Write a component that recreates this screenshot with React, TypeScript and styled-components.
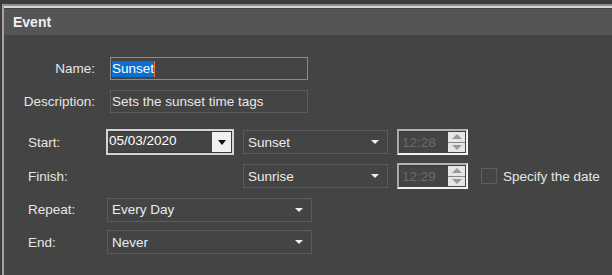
import styled, { createGlobalStyle } from "styled-components";

const GlobalStyle = createGlobalStyle`
    body {
        margin: 0;
        background: #3c3c3c;
        font-family: "Liberation Sans", Arial, sans-serif;
        font-size: 13.5px;
        color: #e6e6e6;
    }
`

export default function App() {
    return (
        <>
            <GlobalStyle />
            <Page>
                <Panel>
                    <Header>Event</Header>
                    <TopForm>
                        <RightLabel>Name:</RightLabel>
                        <TextBox focused>
                            <Selected>Sunset</Selected>
                            <Caret />
                        </TextBox>
                        <RightLabel>Description:</RightLabel>
                        <TextBox>Sets the sunset time tags</TextBox>
                    </TopForm>
                    <Schedule>
                        <Row height={26}>
                            <Label>Start:</Label>
                            <DatePicker>
                                <DateText>05/03/2020</DateText>
                                <DateButton>
                                    <Arrow color="#111" />
                                </DateButton>
                            </DatePicker>
                            <Combo width={145}>
                                Sunset
                                <Arrow color="#eee" small />
                            </Combo>
                            <TimeSpin>
                                <TimeText>12:28</TimeText>
                                <SpinButtons>
                                    <SpinHalf><SpinArrow up /></SpinHalf>
                                    <SpinHalf><SpinArrow /></SpinHalf>
                                </SpinButtons>
                            </TimeSpin>
                        </Row>
                        <Row height={26}>
                            <Label>Finish:</Label>
                            <DateSlot />
                            <Combo width={145}>
                                Sunrise
                                <Arrow color="#eee" small />
                            </Combo>
                            <TimeSpin>
                                <TimeText>12:29</TimeText>
                                <SpinButtons>
                                    <SpinHalf><SpinArrow up /></SpinHalf>
                                    <SpinHalf><SpinArrow /></SpinHalf>
                                </SpinButtons>
                            </TimeSpin>
                            <CheckRow>
                                <CheckBox />
                                <span>Specify the date</span>
                            </CheckRow>
                        </Row>
                        <Row height={25}>
                            <Label>Repeat:</Label>
                            <Combo width={205} shift={1}>
                                Every Day
                                <Arrow color="#eee" small />
                            </Combo>
                        </Row>
                        <Row height={24}>
                            <Label>End:</Label>
                            <Combo width={205} shift={1}>
                                Never
                                <Arrow color="#eee" small />
                            </Combo>
                        </Row>
                    </Schedule>
                </Panel>
            </Page>
        </>
    )
}

const Page = styled.div`
    width: 612px;
    height: 275px;
    padding: 4px 0 0 2px;
    box-sizing: border-box;
    overflow: hidden;
`

const Panel = styled.div`
    height: 100%;
    background: #444444;
    border-top: 2px solid #8e8e8e;
    border-left: 2px solid #a4a4a4;
    box-shadow: inset 0 2px 0 #d6d6d6;
    padding-top: 3px;
`

const Header = styled.div`
    height: 26px;
    display: flex;
    align-items: center;
    padding-left: 9px;
    background: #555555;
    font-weight: 700;
    font-size: 14px;
    color: #f0f0f0;
`

const TopForm = styled.div`
    display: grid;
    grid-template-columns: 91px 198px;
    column-gap: 15px;
    row-gap: 10px;
    align-items: center;
    padding-top: 22px;
`

const RightLabel = styled.div`
    text-align: right;
`

const TextBox = styled.div<{ focused?: boolean }>`
    height: 23px;
    box-sizing: border-box;
    border: 1px solid ${(p) => (p.focused ? "#8c8c86" : "#5c5c5c")};
    display: flex;
    align-items: center;
    padding-left: 1px;
    color: #e8e8e8;
`

const Selected = styled.span`
    background: #0a6fd0;
    color: #ffffff;
    line-height: 16px;
`

const Caret = styled.span`
    width: 1px;
    height: 16px;
    background: #e07a2a;
`

const Schedule = styled.div`
    display: flex;
    flex-direction: column;
    gap: 8px;
    padding: 16px 0 0 24px;
`

const Row = styled.div<{ height: number }>`
    display: flex;
    align-items: center;
    height: ${(p) => p.height}px;
`

const Label = styled.div`
    width: 78px;
    flex-shrink: 0;
`

const DatePicker = styled.div`
    width: 128px;
    height: 26px;
    box-sizing: border-box;
    border: 2px solid #d4d4d4;
    box-shadow: inset 0 0 0 1px #3a3a3a;
    display: flex;
    align-items: center;
    justify-content: space-between;
    margin-right: 9px;
`

const DateSlot = styled.div`
    width: 128px;
    margin-right: 9px;
`

const DateText = styled.span`
    color: #ffffff;
    padding-left: 1px;
    margin-top: -3px;
`

const DateButton = styled.div`
    width: 19px;
    height: 20px;
    margin-right: 1px;
    background: #f0f0f0;
    display: flex;
    align-items: center;
    justify-content: center;
`

const Arrow = styled.span<{ color: string; small?: boolean }>`
    width: 0;
    height: 0;
    border-left: 4px solid transparent;
    border-right: 4px solid transparent;
    border-top: ${(p) => (p.small ? 4 : 5)}px solid ${(p) => p.color};
`

const Combo = styled.div<{ width: number; shift?: number }>`
    width: ${(p) => p.width}px;
    height: 100%;
    max-height: 24px;
    box-sizing: border-box;
    border: 1px solid #5c5c5c;
    display: flex;
    align-items: center;
    justify-content: space-between;
    padding: 0 8px 0 4px;
    margin-left: ${(p) => p.shift || 0}px;
    margin-right: 9px;
    color: #ececec;
`

const TimeSpin = styled.div`
    width: 71px;
    height: 26px;
    box-sizing: border-box;
    border-top: 2px solid #b4b4b4;
    border-left: 2px solid #a8a8a8;
    border-right: 2px solid #f2f2f2;
    border-bottom: 2px solid #f2f2f2;
    box-shadow: inset 1px 1px 0 #3a3a3a;
    display: flex;
    align-items: center;
    justify-content: space-between;
    padding-left: 3px;
`

const TimeText = styled.span`
    color: #6a6a6a;
`

const SpinButtons = styled.div`
    width: 17px;
    height: 20px;
    margin-right: 1px;
    display: flex;
    flex-direction: column;
    gap: 1px;
    background: #888;
`

const SpinHalf = styled.div`
    flex: 1;
    background: #e6e6e6;
    display: flex;
    align-items: center;
    justify-content: center;
`

const SpinArrow = styled.span<{ up?: boolean }>`
    width: 0;
    height: 0;
    border-left: 5px solid transparent;
    border-right: 5px solid transparent;
    ${(p) => (p.up ? "border-bottom: 5px solid #9a9a9a;" : "border-top: 5px solid #9a9a9a;")}
`

const CheckRow = styled.label`
    display: flex;
    align-items: center;
    gap: 6px;
    margin-left: 13px;
`

const CheckBox = styled.span`
    width: 16px;
    height: 16px;
    box-sizing: border-box;
    border: 1px solid #5e5e5e;
`
